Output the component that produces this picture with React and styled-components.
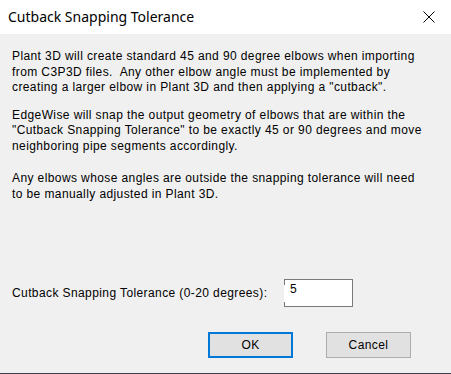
import React from "react";
import styled, { createGlobalStyle } from "styled-components";

const Global = createGlobalStyle`
  html, body { margin: 0; padding: 0; background: #f0f0f0; }
  body { width: 451px; height: 374px; overflow: hidden; }
`;

const Dialog = styled.div`
  width: 451px;
  height: 374px;
  display: flex;
  flex-direction: column;
  background: #f0f0f0;
  border-bottom: 1px solid #3f3f48;
  box-sizing: border-box;
  font-family: "Liberation Sans", Arial, sans-serif;
  color: #000;
`;

const TitleBar = styled.div`
  height: 34px;
  flex: none;
  background: #fff;
  display: flex;
  align-items: center;
  justify-content: space-between;
  padding: 0 0 0 8px;
`;

const Title = styled.div`
  font-family: "Noto Sans", "Open Sans", sans-serif;
  font-size: 14px;
  color: #000;
  margin-top: -1px;
`;

const CloseButton = styled.div`
  width: 46px;
  height: 34px;
  display: flex;
  align-items: center;
  justify-content: center;
  margin-right: -1px;
`;

const Body = styled.div`
  flex: 1;
  display: flex;
  flex-direction: column;
  padding: 15px 0 0 12px;
  font-size: 12px;
  letter-spacing: 0.4px;
`;

const Paragraph = styled.div`
  white-space: pre;
  line-height: 15.5px;
  margin-top: ${(p) => p.$gap || 0}px;
`;

const FieldRow = styled.div`
  display: grid;
  grid-template-columns: 272px 69px;
  align-items: center;
  margin-top: 77px;
`;

const FieldLabel = styled.div`
  line-height: 15px;
`;

const TextBox = styled.div`
  position: relative;
  height: 28px;
  box-sizing: border-box;
  border: 1px solid #7a7a7a;
  background: #fff;
  padding: 2px 0 0 5px;
  line-height: 15px;
  &::before {
    content: "";
    position: absolute;
    left: -1px;
    top: 5px;
    width: 1px;
    height: 17px;
    background: #fff;
  }
`;

const ButtonRow = styled.div`
  display: flex;
  justify-content: flex-end;
  gap: 33px;
  padding-right: 40px;
  margin-top: 25px;
`;

const Button = styled.div`
  width: 85px;
  height: 26px;
  box-sizing: border-box;
  background: #e1e1e1;
  border: ${(p) => (p.$default ? "2px solid #0078d7" : "1px solid #adadad")};
  display: flex;
  align-items: center;
  justify-content: center;
  font-size: 12px;
`;

export default function App() {
  return (
    <>
      <Global />
      <Dialog>
        <TitleBar>
          <Title>Cutback Snapping Tolerance</Title>
          <CloseButton>
            <svg width="12" height="12" viewBox="0 0 12 12">
              <path d="M0.5 0.5 L11.5 11.5 M11.5 0.5 L0.5 11.5" stroke="#000" strokeWidth="1" fill="none" />
            </svg>
          </CloseButton>
        </TitleBar>
        <Body>
          <Paragraph>
            {"Plant 3D will create standard 45 and 90 degree elbows when importing\nfrom C3P3D files.  Any other elbow angle must be implemented by\ncreating a larger elbow in Plant 3D and then applying a \"cutback\"."}
          </Paragraph>
          <Paragraph $gap={12}>
            {"EdgeWise will snap the output geometry of elbows that are within the\n\"Cutback Snapping Tolerance\" to be exactly 45 or 90 degrees and move\nneighboring pipe segments accordingly."}
          </Paragraph>
          <Paragraph $gap={17}>
            {"Any elbows whose angles are outside the snapping tolerance will need\nto be manually adjusted in Plant 3D."}
          </Paragraph>
          <FieldRow>
            <FieldLabel>Cutback Snapping Tolerance (0-20 degrees):</FieldLabel>
            <TextBox>5</TextBox>
          </FieldRow>
          <ButtonRow>
            <Button $default>OK</Button>
            <Button>Cancel</Button>
          </ButtonRow>
        </Body>
      </Dialog>
    </>
  );
}
